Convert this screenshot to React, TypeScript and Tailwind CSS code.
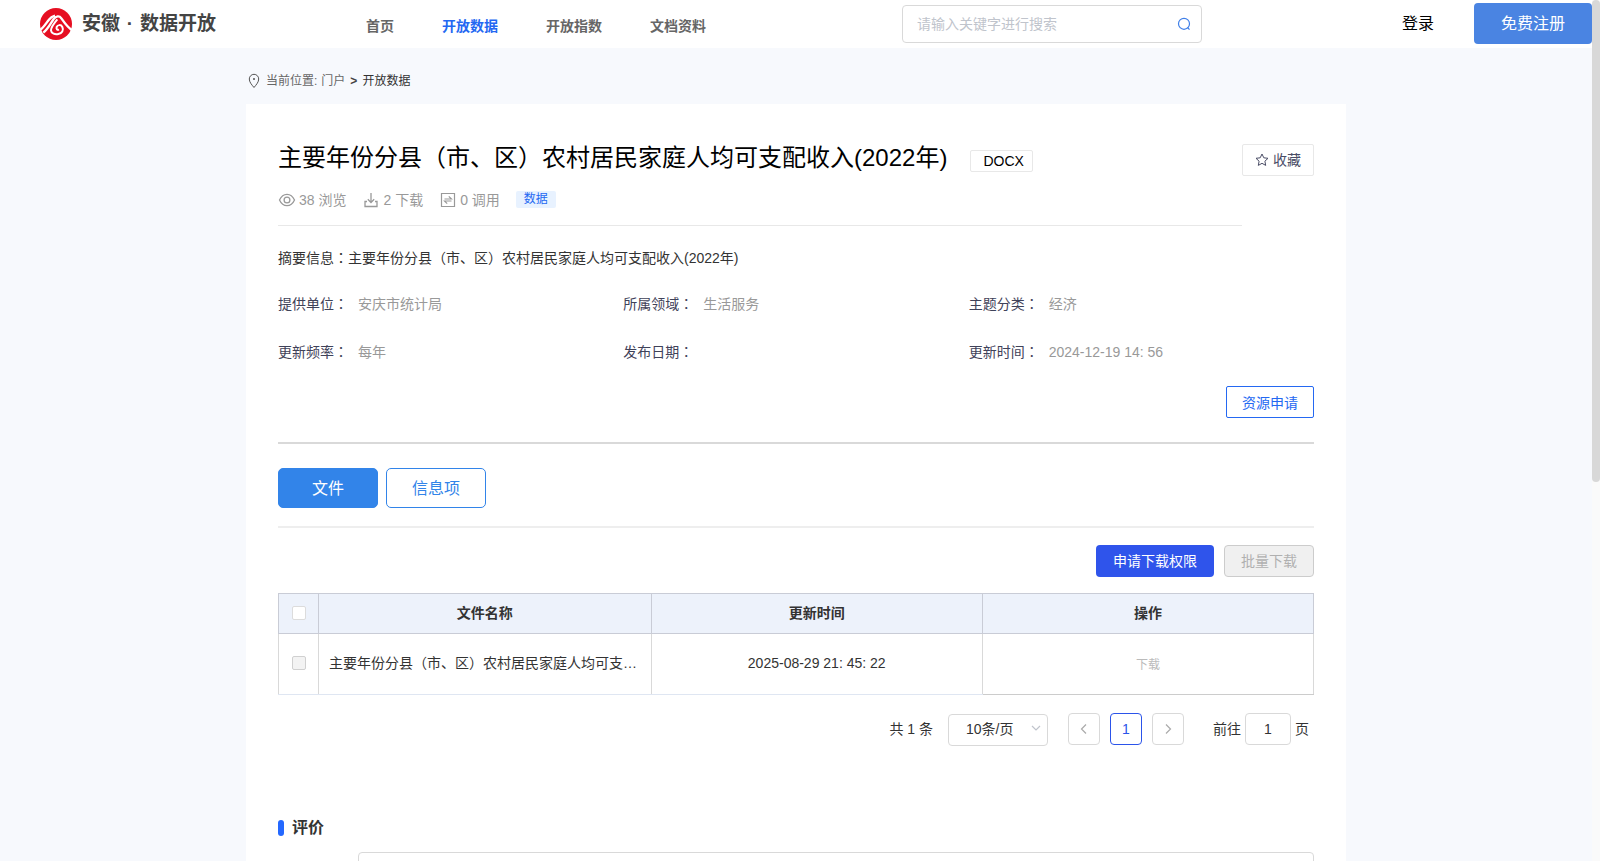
import { useState } from "react";

const TITLE = "主要年份分县（市、区）农村居民家庭人均可支配收入(2022年)";

const navItems = ["首页", "开放数据", "开放指数", "文档资料"];

const fields = [
  { label: "提供单位", value: "安庆市统计局" },
  { label: "所属领域", value: "生活服务" },
  { label: "主题分类", value: "经济" },
  { label: "更新频率", value: "每年" },
  { label: "发布日期", value: "" },
  { label: "更新时间", value: "2024-12-19 14: 56" },
];

const files = [{ name: TITLE, updatedAt: "2025-08-29 21: 45: 22" }];

function Logo() {
  return (
    <svg viewBox="0 0 96 96" className="size-8" aria-hidden="true">
      <circle cx="48" cy="48" r="48" fill="#e60f22" />
      <g fill="none" stroke="#fff" strokeLinejoin="round">
        <path d="M-2 68 C10 60 17 48 26 36 C31 29 37 25 45 23" strokeWidth="7" />
        <path
          d="M10 74 C24 63 32 46 41 33 C48 24 58 22 64 31 C73 44 82 58 98 68"
          strokeWidth="7"
        />
        <path
          d="M52 34 C41 47 33 58 33 67 C34 77 45 80 55 78 C66 76 72 67 67 57 C63 49 53 50 50 57 C48 63 52 67 57 65"
          strokeWidth="6"
        />
      </g>
    </svg>
  );
}

function PinIcon() {
  return (
    <svg viewBox="0 0 12 16" className="h-4 w-3" fill="none" stroke="#555" aria-hidden="true">
      <path d="M6 14.500C3.500 11.500 1.300 9 1.300 6a4.700 4.700 0 0 1 9.400 0c0 3-2.200 5.500-4.700 8.500z" />
      <circle cx="6" cy="6" r="0.600" fill="#555" />
    </svg>
  );
}

function SearchIcon() {
  return (
    <svg viewBox="0 0 14 14" className="size-3.5" fill="none" stroke="#3f7fe8" strokeWidth="1.200" aria-hidden="true">
      <circle cx="7" cy="6.800" r="5.500" />
      <path d="M10.500 10.500l2 2.200" />
    </svg>
  );
}

function EyeIcon() {
  return (
    <svg viewBox="0 0 18 16" className="h-4 w-[18px]" fill="none" stroke="#999" strokeWidth="1.300" aria-hidden="true">
      <path d="M1.500 8C3.200 4.300 6 2.300 9 2.300s5.800 2 7.500 5.700c-1.700 3.700-4.500 5.700-7.500 5.700S3.200 11.700 1.500 8z" />
      <circle cx="9" cy="8" r="2.900" />
    </svg>
  );
}

function DownloadIcon() {
  return (
    <svg viewBox="0 0 16 16" className="size-4" fill="none" stroke="#999" strokeWidth="1.300" aria-hidden="true">
      <path d="M8 1v9.500M4.800 7.300L8 10.500l3.200-3.200M4 9.500H2v5h12v-5h-2" />
    </svg>
  );
}

function InvokeIcon() {
  return (
    <svg viewBox="0 0 16 16" className="size-4" fill="none" stroke="#999" strokeWidth="1.200" aria-hidden="true">
      <path d="M1.500 1.500h13v13h-13z" />
      <path d="M4.500 7h7L8.800 4.300M11.500 9h-7l2.700 2.700" />
    </svg>
  );
}

function StarIcon() {
  return (
    <svg viewBox="0 0 14 14" className="size-3.5" fill="none" stroke="#4a4d66" strokeLinejoin="round" aria-hidden="true">
      <path d="M7 1l1.800 3.800 4.200.5-3.100 2.900.8 4.200L7 10.300l-3.700 2.100.8-4.200L1 5.300l4.200-.5z" />
    </svg>
  );
}

function Chevron({ d }: { d: string }) {
  return (
    <svg viewBox="0 0 12 12" className="size-3" fill="none" stroke="currentColor" strokeWidth="1.200" aria-hidden="true">
      <path d={d} />
    </svg>
  );
}

// The JP face sets the full-width colon in the middle of its box
function Colon() {
  return <span className="font-['Noto_Sans_CJK_JP',sans-serif] leading-none">：</span>;
}

const checkboxClass =
  "block size-3.5 appearance-none rounded-[2px] border border-[#dcdcdc] bg-white disabled:border-[#d0d0d0] disabled:bg-[#f3f3f3]";

function Header() {
  return (
    <header className="flex h-12 items-center bg-white">
      <a href="#" className="ml-10 flex items-center gap-2.5">
        <Logo />
        <span className="flex text-[19px] leading-8 font-bold text-[#444]">
          安徽<span className="w-5 text-center">·</span>数据开放
        </span>
      </a>
      <nav className="ml-[150px] flex gap-12 pt-1">
        {navItems.map((item) => (
          <a
            key={item}
            href="#"
            className={`text-sm font-bold ${item === "开放数据" ? "text-[#2468f2]" : "text-[#666]"}`}
          >
            {item}
          </a>
        ))}
      </nav>
      <form className="ml-auto flex h-[38px] w-[300px] items-center rounded border border-[#d9d9d9] pr-2.5 pl-3.5">
        <input
          type="search"
          aria-label="搜索"
          placeholder="请输入关键字进行搜索"
          className="min-w-0 flex-1 text-sm outline-none placeholder:text-[#c0c4cc]"
        />
        <button type="button" aria-label="搜索">
          <SearchIcon />
        </button>
      </form>
      <a href="#" className="ml-[200px] text-base text-black">
        登录
      </a>
      <button type="button" className="mb-px ml-10 h-[41px] w-[118px] rounded bg-[#4a84e2] text-base text-white">
        免费注册
      </button>
    </header>
  );
}

function Summary() {
  return (
    <>
      <div className="flex items-start">
        <div className="flex-1 border-b border-[#e8e8e8] pb-[15px]">
          <div className="flex items-center">
            <h1 className="text-2xl leading-9 text-black">{TITLE}</h1>
            <span className="mt-1.5 ml-[23px] rounded-[2px] border border-[#e8e8e8] pr-2 pl-3 text-sm leading-5 text-black">
              DOCX
            </span>
          </div>
          <div className="mt-3.5 flex items-center text-sm text-[#999]">
            <EyeIcon />
            <span className="ml-[3px]">38 浏览</span>
            <span className="ml-[17px] flex items-center gap-1">
              <DownloadIcon />2 下载
            </span>
            <span className="ml-[17px] flex items-center gap-1">
              <InvokeIcon />0 调用
            </span>
            <span className="mb-0.5 ml-4 rounded-[2px] bg-[#e8f2ff] px-2 text-xs leading-[17px] text-[#2468f2]">
              数据
            </span>
          </div>
        </div>
        <button
          type="button"
          className="mt-1 flex h-8 w-[72px] items-center justify-center gap-1 rounded-[2px] border border-[#e8e8e8] text-sm text-[#4a4d66]"
        >
          <StarIcon />
          收藏
        </button>
      </div>

      <p className="mt-[22px] text-sm text-[#333]">
        摘要信息
        <Colon />
        {TITLE}
      </p>

      <dl className="mt-[26px] grid grid-cols-3 gap-y-7 text-sm">
        {fields.map((field) => (
          <div key={field.label} className="flex gap-2.5">
            <dt className="text-[#3f4259]">
              {field.label}
              <Colon />
            </dt>
            <dd className="text-[#999]">{field.value}</dd>
          </div>
        ))}
      </dl>

      <div className="mt-6 flex justify-end border-b-2 border-[#d9d9d9] pb-6">
        <button
          type="button"
          className="h-8 w-[88px] rounded-[2px] border border-[#2468f2] pt-0.5 text-sm text-[#2468f2]"
        >
          资源申请
        </button>
      </div>
    </>
  );
}

function FileTable() {
  return (
    <table className="mt-4 w-full table-fixed border-collapse border border-[#d6d8de] text-sm">
      <colgroup>
        <col className="w-10" />
        <col />
        <col className="w-[32%]" />
        <col className="w-[32%]" />
      </colgroup>
      <thead className="bg-[#edf2fb]">
        <tr className="h-10">
          <th className="border border-[#c9ccd6] px-[13px] pb-0.5">
            <input type="checkbox" aria-label="全选" className={checkboxClass} />
          </th>
          <th className="border border-[#c9ccd6] pb-0.5 font-bold text-[#333]">文件名称</th>
          <th className="border border-[#c9ccd6] pb-0.5 font-bold text-[#333]">更新时间</th>
          <th className="border border-[#c9ccd6] pb-0.5 font-bold text-[#333]">操作</th>
        </tr>
      </thead>
      <tbody>
        {files.map((file) => (
          <tr key={file.name} className="h-[61px] text-[#333]">
            <td className="border border-[#d9d9d9] border-b-[#dfe6f2] px-[13px] pb-0.5">
              <input type="checkbox" aria-label={file.name} disabled className={checkboxClass} />
            </td>
            <td className="truncate border border-[#d9d9d9] border-b-[#dfe6f2] px-2.5 pb-0.5">{file.name}</td>
            <td className="border border-[#d9d9d9] border-b-[#dfe6f2] pb-0.5 text-center">{file.updatedAt}</td>
            <td className="border border-[#d9d9d9] border-b-[#ccc] text-center">
              <button type="button" disabled className="text-xs text-[#bbb]">
                下载
              </button>
            </td>
          </tr>
        ))}
      </tbody>
    </table>
  );
}

function Pagination() {
  return (
    <div className="mt-[17px] flex items-center justify-end pr-[5px] text-sm text-[#333]">
      <span>共 1 条</span>
      <div className="relative mt-0.5 ml-[15px]">
        <select
          aria-label="每页条数"
          className="block h-8 w-[100px] appearance-none rounded border border-[#d9d9d9] bg-white pb-0.5 pl-[17px]"
        >
          <option>10条/页</option>
        </select>
        <span className="pointer-events-none absolute top-2 right-1.5 text-[#c0c4cc]">
          <Chevron d="M2 4l4 4 4-4" />
        </span>
      </div>
      <div className="ml-5 flex gap-2.5">
        <button
          type="button"
          aria-label="上一页"
          className="flex size-8 items-center justify-center rounded border border-[#d9d9d9] text-[#aaa]"
        >
          <Chevron d="M8 1.500L3.500 6 8 10.500" />
        </button>
        <button type="button" className="size-8 rounded border border-[#2b54ea] text-[#2b54ea]">
          1
        </button>
        <button
          type="button"
          aria-label="下一页"
          className="flex size-8 items-center justify-center rounded border border-[#d9d9d9] text-[#aaa]"
        >
          <Chevron d="M4 1.500L8.500 6 4 10.500" />
        </button>
      </div>
      <label htmlFor="page-jump" className="ml-[29px]">
        前往
      </label>
      <input
        id="page-jump"
        defaultValue="1"
        className="mx-1 h-8 w-[46px] rounded border border-[#d9d9d9] text-center outline-none"
      />
      <span>页</span>
    </div>
  );
}

export default function App() {
  const [tab, setTab] = useState("文件");

  return (
    <div className="flex h-screen bg-[#f7f9fd] font-['Liberation_Sans','Noto_Sans_CJK_SC',sans-serif]">
      <div className="min-w-0 flex-1 overflow-y-auto [scrollbar-width:none]">
        <Header />

        <main className="mx-auto w-full max-w-[1100px] pb-16">
          <div className="flex h-14 items-center pt-2.5 pl-0.5 text-xs text-[#666]">
            <PinIcon />
            <span className="ml-1.5">当前位置:</span>
            <a href="#" className="ml-1">
              门户
            </a>
            <span className="mx-[5px] font-bold text-[#444]">&gt;</span>
            <span className="text-[#333]">开放数据</span>
          </div>

          <section className="bg-white px-8 pt-9 pb-10">
            <Summary />

            <div className="flex gap-2 border-b-2 border-[#eee] pt-6 pb-[18px]">
              {["文件", "信息项"].map((name) => (
                <button
                  key={name}
                  type="button"
                  onClick={() => setTab(name)}
                  className={`h-10 w-[100px] rounded-[5px] border border-[#3284e9] pt-0.5 text-base ${
                    tab === name ? "bg-[#3284e9] text-white" : "bg-white text-[#3284e9]"
                  }`}
                >
                  {name}
                </button>
              ))}
            </div>

            <div className="mt-[17px] flex justify-end gap-2.5">
              <button type="button" className="h-8 w-[118px] rounded bg-[#2f54eb] text-sm text-white">
                申请下载权限
              </button>
              <button
                type="button"
                disabled
                className="h-8 w-[90px] rounded border border-[#ccc] bg-[#f0f0f0] text-sm text-[#b0b0b0]"
              >
                批量下载
              </button>
            </div>

            <FileTable />
            <Pagination />

            <h2 className="mt-[70px] flex items-center gap-2 text-base font-bold text-[#333]">
              <span className="h-4 w-1.5 rounded-[3px] bg-[#2468ff]" />
              评价
            </h2>
            <div className="mt-3 pl-20">
              <textarea
                aria-label="评价"
                className="block h-32 w-full resize-none rounded border border-[#d9d9d9] outline-none"
              />
            </div>
          </section>
        </main>
      </div>

      {/* Scroll track */}
      <div className="w-2 bg-[#fafafa]">
        <div className="h-[56%] rounded bg-[#d8d8d8]" />
      </div>
    </div>
  );
}
